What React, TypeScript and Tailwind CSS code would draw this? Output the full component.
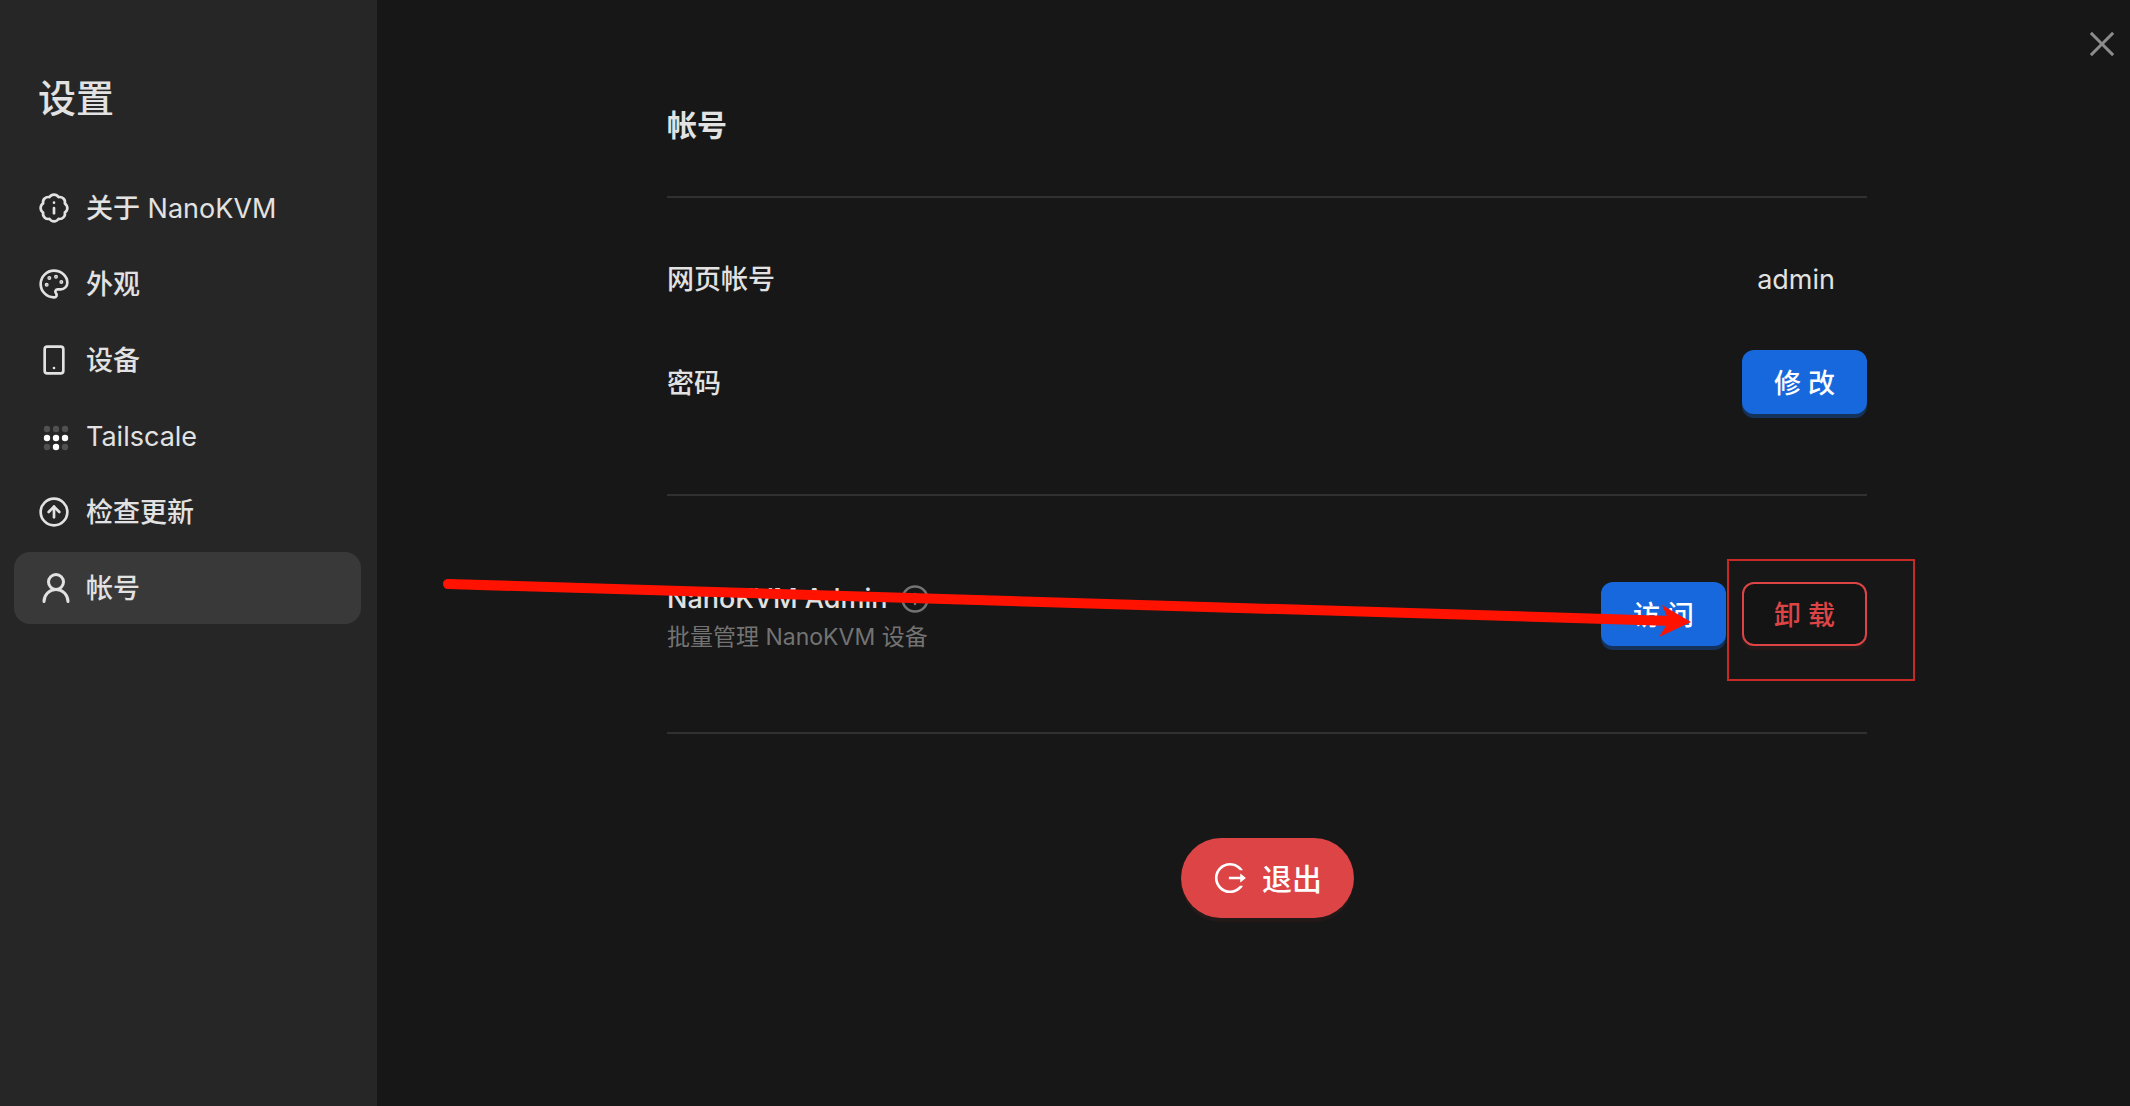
import React from 'react';
import { BadgeInfo, Palette, Smartphone, CircleArrowUp, UserRound, Info } from 'lucide-react';
import { AiOutlineClose, AiOutlineLogout } from 'react-icons/ai';

function TailscaleIcon() {
  const dots = [
    [0, 0, false], [1, 0, false], [2, 0, false],
    [0, 1, true], [1, 1, true], [2, 1, true],
    [0, 2, false], [1, 2, true], [2, 2, false],
  ] as const;
  return (
    <svg width="36" height="34" viewBox="0 0 36 34" aria-hidden="true">
      {dots.map(([x, y, lit]) => (
        <circle key={`${x}-${y}`} cx={9 + x * 9} cy={10 + y * 9} r={3.2} fill={lit ? '#fff' : '#505050'} />
      ))}
    </svg>
  );
}

const items = [
  { label: '关于', latin: ' NanoKVM', icon: <BadgeInfo size={32} strokeWidth={2} /> },
  { label: '外观', icon: <Palette size={32} strokeWidth={2} /> },
  { label: '设备', icon: <Smartphone size={32} strokeWidth={2} /> },
  { label: '', latin: 'Tailscale', icon: <TailscaleIcon /> },
  { label: '检查更新', icon: <CircleArrowUp size={32} strokeWidth={2} /> },
  { label: '帐号', icon: <UserRound size={36} strokeWidth={2} />, active: true },
];

function PrimaryButton({ children }: { children: React.ReactNode }) {
  return (
    <button
      type="button"
      className="h-16 w-[125px] rounded-xl bg-[#1668dc] pt-1 text-[27px] font-medium text-white shadow-[0_4px_0_#15325b]"
    >
      {children}
    </button>
  );
}

export default function App() {
  return (
    <div className="flex min-h-screen bg-[#171717] font-[Inter,'Noto_Sans_CJK_SC',sans-serif] text-[27px] leading-9 text-[#e2e2e2]">
      <aside className="w-[377px] shrink-0 bg-[#262626] pr-4 pl-3.5">
        <h1 className="mt-[74px] mb-[50px] pl-6 text-[38px] leading-12 font-medium">设置</h1>
        <nav className="flex flex-col gap-1">
          {items.map((item) => (
            <button
              key={item.label}
              type="button"
              aria-current={item.active ? 'page' : undefined}
              className={
                item.active
                  ? 'flex h-18 items-center rounded-2xl bg-[#393939] pl-6 text-left'
                  : 'flex h-18 items-center rounded-2xl pl-6 text-left'
              }
            >
              <span className="flex w-12 shrink-0">{item.icon}</span>
              <span className="pt-0.5 whitespace-pre">
                <span className="font-medium">{item.label}</span>
                {item.latin}
              </span>
            </button>
          ))}
        </nav>
      </aside>

      <main className="relative flex-1 pl-[27px]">
        <button type="button" aria-label="关闭" className="absolute top-[26px] right-2.5 text-[#8c8c8c]">
          <AiOutlineClose size={36} />
        </button>

        <div className="mx-auto max-w-[1200px] pt-[107px]">
          <h2 className="text-[30px] leading-9 font-bold">帐号</h2>
          <hr className="mt-[53px] border-t-2 border-[#303030]" />

          <div className="mt-16 flex items-center justify-between">
            <span className="font-medium">网页帐号</span>
            <span className="pr-8">admin</span>
          </div>
          <div className="mt-[52px] flex items-center justify-between">
            <span className="pt-1 font-medium">密码</span>
            <PrimaryButton>修 改</PrimaryButton>
          </div>

          <hr className="mt-20 border-t-2 border-[#303030]" />

          <div className="relative mt-[83px] flex items-start justify-between">
            <div className="flex flex-col">
              <div className="flex h-10 items-center gap-4">
                <span className="font-medium">NanoKVM Admin</span>
                <Info size={30} strokeWidth={2} className="-ml-1 text-[#737373]" />
              </div>
              <span className="text-[23px] text-[#737373]">批量管理 NanoKVM 设备</span>
            </div>
            <div className="flex gap-4 pt-[3px]">
              <PrimaryButton>访 问</PrimaryButton>
              <div className="relative">
                <button
                  type="button"
                  className="h-16 w-[125px] rounded-xl border-2 border-[#dc4446] bg-[#141414] pt-1 text-[27px] font-medium text-[#dc4446] shadow-[0_4px_0_#241919]"
                >
                  卸 载
                </button>
                <div className="pointer-events-none absolute -top-[23px] -left-[15px] h-[122px] w-[188px] border-2 border-[#c62a24]" />
              </div>
            </div>
            <svg
              className="pointer-events-none absolute -top-4 right-[170px]"
              width="1260"
              height="80"
              viewBox="0 0 1260 80"
              aria-hidden="true"
            >
              <path d="M11 21 L1235 58" stroke="#ff1200" strokeWidth="10" strokeLinecap="round" />
              <path d="M1225 42 L1254 59 L1222 74 L1232 58 Z" fill="#ff1200" />
            </svg>
          </div>

          <hr className="mt-[77px] border-t-2 border-[#303030]" />

          <div className="mt-[104px] flex justify-center">
            <button
              type="button"
              className="flex h-20 w-[173px] items-center justify-center gap-3.5 rounded-full bg-[#dc4446] text-[30px] font-medium text-white shadow-[0_4px_0_#241919]"
            >
              <AiOutlineLogout size={36} />
              <span className="pt-0.5">退出</span>
            </button>
          </div>
        </div>
      </main>
    </div>
  );
}
